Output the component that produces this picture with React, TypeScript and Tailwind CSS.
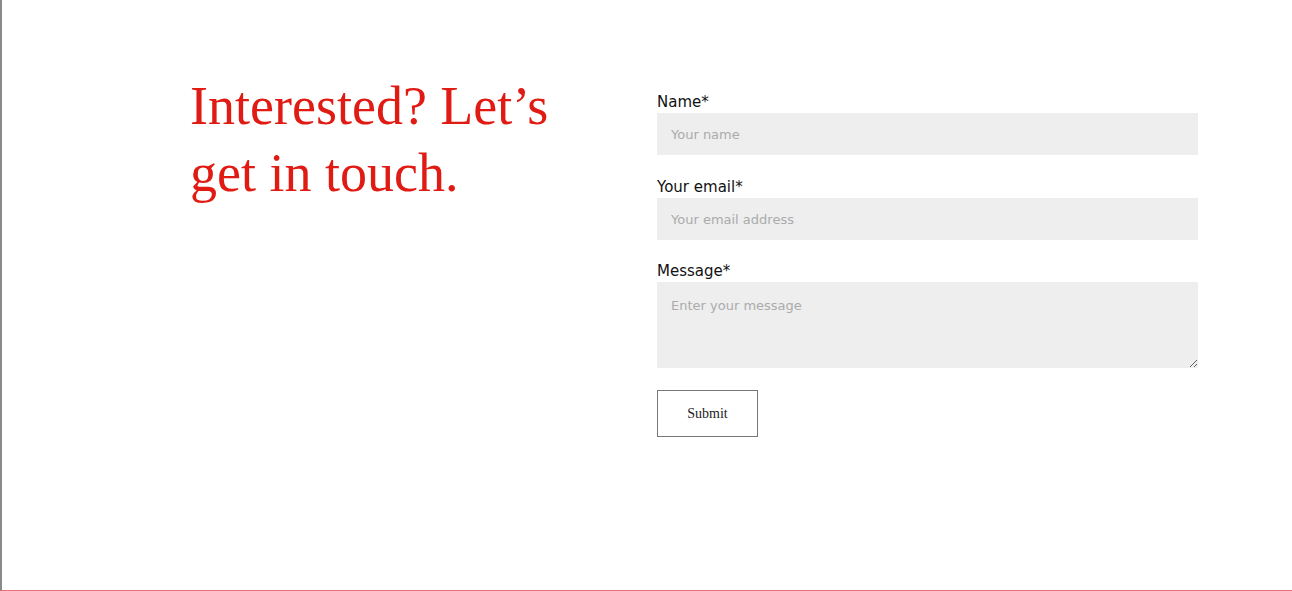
import { useState } from "react";

const labelCls =
  "block text-[15px] leading-[22px] text-[#111] font-['DejaVu_Sans',sans-serif]";
const fieldCls =
  "block w-full bg-[#eeeeee] px-[14px] text-[13px] text-[#333] placeholder:text-[#ababab] outline-none font-['DejaVu_Sans',sans-serif]";

function ContactForm() {
  const [name, setName] = useState("");
  const [email, setEmail] = useState("");
  const [message, setMessage] = useState("");

  return (
    <form className="w-[541px] pt-[91px]" onSubmit={(e) => e.preventDefault()}>
      <label className={labelCls}>Name*</label>
      <input
        className={`${fieldCls} h-[42px]`}
        placeholder="Your name"
        value={name}
        onChange={(e) => setName(e.target.value)}
      />

      <label className={`${labelCls} mt-[21px]`}>Your email*</label>
      <input
        className={`${fieldCls} h-[42px]`}
        placeholder="Your email address"
        value={email}
        onChange={(e) => setEmail(e.target.value)}
      />

      <label className={`${labelCls} mt-[20px]`}>Message*</label>
      <textarea
        className={`${fieldCls} h-[86px] pt-[15px] leading-[18px]`}
        placeholder="Enter your message"
        value={message}
        onChange={(e) => setMessage(e.target.value)}
      />

      <button
        type="submit"
        className="mt-[22px] w-[101px] h-[47px] border border-[#777] bg-white text-[14px] text-[#222] font-['Liberation_Serif',serif]"
      >
        Submit
      </button>
    </form>
  );
}

export default function App() {
  return (
    <div className="h-[591px] w-full box-border border-l-2 border-l-[#8a8a8a] border-b border-b-[#e57373] bg-white overflow-hidden">
      <div className="flex pl-[188px]">
        <div className="w-[467px] pt-[73px]">
          <h1 className="w-[420px] text-[54px] leading-[67px] text-[#e01b14] font-['Liberation_Serif',serif] font-normal">
            Interested? Let’s get in touch.
          </h1>
        </div>
        <ContactForm />
      </div>
    </div>
  );
}
